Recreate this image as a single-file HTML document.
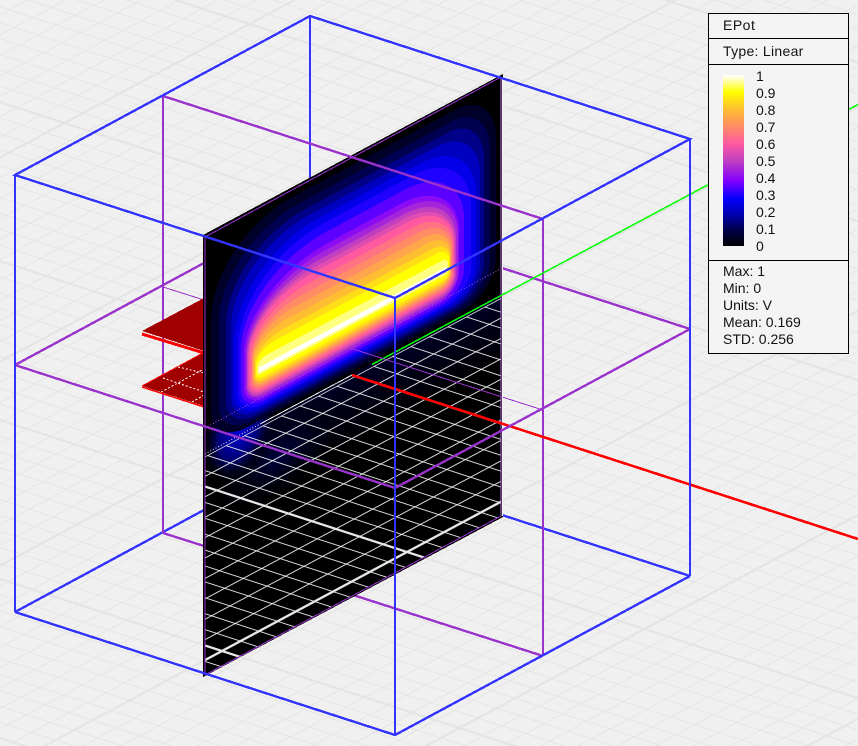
<!DOCTYPE html>
<html>
<head>
<meta charset="utf-8">
<style>
html,body{margin:0;padding:0;background:#f0f0f0;}
#w{position:relative;width:858px;height:746px;overflow:hidden;background:#f0f0f0;}
svg{position:absolute;left:0;top:0;}
#lg{position:absolute;left:708px;top:13px;width:139px;height:339px;background:#f4f4f4;border:1px solid #000;}
.s{position:absolute;left:0;width:139px;height:1px;background:#000;}
.t{position:absolute;font:14px/17px "Liberation Sans",sans-serif;color:#111;white-space:pre;}
#bar{position:absolute;left:14px;top:61px;width:21px;height:171px;background:linear-gradient(to top,#000 0%,#000050 10%,#0000c0 20%,#0800ff 28%,#8000ff 38%,#c040c0 50%,#ff5aa0 60%,#ff8c64 70%,#ffbe32 80%,#ffff00 90%,#fff 100%);}
</style>
</head>
<body>
<div id="w">
<svg width="858" height="746" viewBox="0 0 858 746">
<defs>
<pattern id="bg" patternUnits="userSpaceOnUse" width="100" height="100" patternTransform="matrix(1.85,-.99,2.375,.77,407,552)">
<path d="M10 0V100M20 0V100M30 0V100M40 0V100M50 0V100M60 0V100M70 0V100M80 0V100M90 0V100" stroke="#e4e4e4" stroke-width=".6" fill="none"/>
<path d="M0 10H100M0 20H100M0 30H100M0 40H100M0 50H100M0 60H100M0 70H100M0 80H100M0 90H100" stroke="#e4e4e4" stroke-width=".5" fill="none"/>
<path d="M0 0V100M100 0V100" stroke="#e4e4e4" stroke-width="1.4" fill="none"/>
<path d="M0 0H100M0 100H100" stroke="#e4e4e4" stroke-width="1.2" fill="none"/>
</pattern>
<pattern id="pg" patternUnits="userSpaceOnUse" width="100" height="100" patternTransform="matrix(1.85,-.99,2.375,.77,407,552)">
<path d="M10 0V100M20 0V100M30 0V100M40 0V100M50 0V100M60 0V100M70 0V100M80 0V100M90 0V100" stroke="#f0f0f0" stroke-width=".58" fill="none"/>
<path d="M0 10H100M0 20H100M0 30H100M0 40H100M0 50H100M0 60H100M0 70H100M0 80H100M0 90H100" stroke="#f0f0f0" stroke-width=".5" fill="none"/>
<path d="M0 0V100M100 0V100" stroke="#e8e8e8" stroke-width="1.5" fill="none"/>
<path d="M0 0H100M0 100H100" stroke="#e8e8e8" stroke-width="1.3" fill="none"/>
</pattern>
<clipPath id="abv"><rect x="0" y="0" width="300" height="219"/></clipPath>
<clipPath id="pl"><rect x="0" y="0" width="300" height="445"/></clipPath>
<clipPath id="gr"><polygon points="205,456.5 501,298 501,516 205,676"/></clipPath>
<radialGradient id="gl"><stop offset="0" stop-color="#0000d8"/><stop offset=".55" stop-color="#000078"/><stop offset="1" stop-color="#000000" stop-opacity="0"/></radialGradient>
<radialGradient id="gd"><stop offset="0" stop-color="#000040"/><stop offset="1" stop-color="#000000" stop-opacity="0"/></radialGradient>
<linearGradient id="gv" x1="0" y1="0" x2="0" y2="1"><stop offset="0" stop-color="#000024"/><stop offset="1" stop-color="#000"/></linearGradient>
</defs>

<rect width="858" height="746" fill="#f0f0f0"/>
<rect width="858" height="746" fill="url(#bg)"/>

<g fill="none" stroke-width="2" shape-rendering="crispEdges">
<!-- behind plane -->
<g stroke="#3333ff" stroke-width="2.4">
<path d="M15 612L204 510"/>
<path d="M310 16V178" stroke-width="2"/>
<path d="M502 515L690 576"/>
</g>
<g stroke="#9933cc" stroke-width="2.4">
<path d="M163 96V533" stroke-width="2"/>
<path d="M15 365L204 263"/>
<path d="M163 533L204 546"/>
<path d="M353 595L543 656"/>
<path d="M543 219V656" stroke-width="2"/>
<path d="M502 268L690 329"/>
<path d="M502 397L543 410" stroke-width="1"/>
<path d="M163 287L204 300" stroke-width="1"/>
</g>
</g>

<!-- red sheets -->
<g shape-rendering="crispEdges">
<polygon points="142,386 203,353 204,406" fill="#a00000"/>
<path d="M142 387L204 407" stroke="#ff0000" stroke-width="1.5" fill="none"/>
<path d="M142 386L203 353" stroke="#ff0000" stroke-width="1" fill="none"/>
<path d="M178 367L204 373M163 378L204 392M161 392L204 369M192 402L204 395" stroke="#fff" stroke-width="1" stroke-dasharray="2 2" fill="none"/>
<polygon points="142,331 204,298 204,351" fill="#a00000"/>
<path d="M142 334L204 353" stroke="#ff0000" stroke-width="3" fill="none"/>
</g>

<!-- plane -->
<polygon points="203,235 503,74 503,517 203,677" fill="#000" shape-rendering="crispEdges"/>
<g transform="matrix(1,-.537,0,1,203,235)">
<g clip-path="url(#pl)">
<rect x="56" y="219" width="242" height="70" fill="url(#gv)"/>
<ellipse cx="75" cy="262" rx="70" ry="46" fill="url(#gd)"/>
<ellipse cx="36" cy="214" rx="38" ry="50" fill="url(#gl)"/>
</g>
<g clip-path="url(#abv)" shape-rendering="crispEdges">
<path fill="#000028" d="M8,90 a80,80 0 0 1 80,-80 H253 a40,50 0 0 1 40,50 V180 a36,36 0 0 1 -36,36 H44 a36,36 0 0 1 -36,-36Z"/>
<path fill="#000050" d="M16,95 a80,75 0 0 1 80,-75 H249 a38,48 0 0 1 38,48 V179 a33,33 0 0 1 -33,33 H49 a33,33 0 0 1 -33,-33Z"/>
<path fill="#000088" d="M23,101 a80,72 0 0 1 80,-72 H245 a36,45 0 0 1 36,45 V178 a31,31 0 0 1 -31,31 H54 a31,31 0 0 1 -31,-31Z"/>
<path fill="#0000c0" d="M28,107 a78,70 0 0 1 78,-70 H233 a44,50 0 0 1 44,50 V177 a29,29 0 0 1 -29,29 H57 a29,29 0 0 1 -29,-29Z"/>
<path fill="#0300e9" d="M31,125 a85,80 0 0 1 85,-80 H218 a55,60 0 0 1 55,60 V176 a27,27 0 0 1 -27,27 H58 a27,27 0 0 1 -27,-27Z"/>
<path fill="#2000ff" d="M35,131 a85,78 0 0 1 85,-78 H210 a58,62 0 0 1 58,62 V176 a25,25 0 0 1 -25,25 H60 a25,25 0 0 1 -25,-25Z"/>
<path fill="#5c00ff" d="M38,135 a85,72 0 0 1 85,-72 H201 a60,60 0 0 1 60,60 V175 a23,23 0 0 1 -23,23 H61 a23,23 0 0 1 -23,-23Z"/>
<path fill="#8b0bf5" d="M41,140 a85,65 0 0 1 85,-65 H198 a58,58 0 0 1 58,58 V175 a20,20 0 0 1 -20,20 H61 a20,20 0 0 1 -20,-20Z"/>
<path fill="#a525db" d="M43,141 a80,60 0 0 1 80,-60 H200 a55,55 0 0 1 55,55 V175 a18,18 0 0 1 -18,18 H61 a18,18 0 0 1 -18,-18Z"/>
<path fill="#c040c0" d="M44,143 a75,56 0 0 1 75,-56 H201 a52,52 0 0 1 52,52 V175 a16,16 0 0 1 -16,16 H60 a16,16 0 0 1 -16,-16Z"/>
<path fill="#df4db0" d="M45,144 a70,52 0 0 1 70,-52 H202 a50,50 0 0 1 50,50 V174 a15,15 0 0 1 -15,15 H60 a15,15 0 0 1 -15,-15Z"/>
<path fill="#ff5aa0" d="M46,145 a65,48 0 0 1 65,-48 H205 a46,46 0 0 1 46,46 V173 a14,14 0 0 1 -14,14 H60 a14,14 0 0 1 -14,-14Z"/>
<path fill="#ff7382" d="M48,147 a58,42 0 0 1 58,-42 H210 a40,40 0 0 1 40,40 V172 a13,13 0 0 1 -13,13 H61 a13,13 0 0 1 -13,-13Z"/>
<path fill="#ff8c64" d="M49,149 a50,36 0 0 1 50,-36 H215 a34,34 0 0 1 34,34 V171 a12,12 0 0 1 -12,12 H61 a12,12 0 0 1 -12,-12Z"/>
<path fill="#ffa54b" d="M50,151 a42,30 0 0 1 42,-30 H220 a28,28 0 0 1 28,28 V170 a11,11 0 0 1 -11,11 H61 a11,11 0 0 1 -11,-11Z"/>
<path fill="#ffbe32" d="M51,153 a34,24 0 0 1 34,-24 H225 a22,22 0 0 1 22,22 V169 a10,10 0 0 1 -10,10 H61 a10,10 0 0 1 -10,-10Z"/>
<path fill="#ffde19" d="M52,157 a28,20 0 0 1 28,-20 H229 a18,18 0 0 1 18,18 V169 a8,8 0 0 1 -8,8 H60 a8,8 0 0 1 -8,-8Z"/>
<path fill="#ffff00" d="M53,159 a20,15 0 0 1 20,-15 H234 a12,12 0 0 1 12,12 V168 a6,6 0 0 1 -6,6 H59 a6,6 0 0 1 -6,-6Z"/>
<path fill="#ffff80" d="M54,162 a10,8 0 0 1 10,-8 H239 a6,6 0 0 1 6,6 V167 a3,3 0 0 1 -3,3 H57 a3,3 0 0 1 -3,-3Z"/>
<rect x="56" y="162.5" width="187" height="5" fill="#ffffff"/>
</g>
</g>

<!-- plane grid -->
<rect x="203" y="290" width="300" height="390" fill="url(#pg)" clip-path="url(#gr)"/>
<path d="M260 424L352 375" stroke="#f4f4f4" stroke-width="1" fill="none" shape-rendering="crispEdges"/>
<path d="M205 454L260 424" stroke="#f4f4f4" stroke-width="1" stroke-dasharray="1 2" fill="none"/>

<g fill="none" shape-rendering="crispEdges">
<!-- plane outline -->
<path d="M205 237L501 77M205 237V675M205 675L501 516" stroke="#9933cc" stroke-width="1"/>
<path d="M501 77V516" stroke="#b070d8" stroke-width="1"/>
<path d="M502.5 77V516" stroke="#f4f4f4" stroke-width="1"/>
<!-- axes -->
<path d="M372 364.5L858 104.5" stroke="#00ff00" stroke-width="1.5"/>
<path d="M352 375L858 539" stroke="#ff0000" stroke-width="2.6"/>
<!-- purple front -->
<g stroke="#9933cc" stroke-width="2.4">
<path d="M163 96L543 219"/>
<path d="M15 365L395 488L690 329"/>
<path d="M350 348L502 397" stroke-width="1"/>
</g>
<path d="M205 428L502 268" stroke="#a050e0" stroke-width="1" stroke-dasharray="1 2"/>
<!-- blue front -->
<g stroke="#3333ff" stroke-width="2.4">
<path d="M15 175L310 16L690 139L395 298Z"/>
<path d="M15 612L395 735L690 576"/>
<path d="M15 175V612M690 139V576M395 298V735" stroke-width="2"/>
</g>
</g>
</svg>

<div id="lg">
<div class="s" style="top:24px"></div>
<div class="s" style="top:50px"></div>
<div class="s" style="top:246px"></div>
<div class="t" style="left:14px;top:3px;letter-spacing:.5px">EPot</div>
<div class="t" style="left:14px;top:29px;letter-spacing:.3px">Type: Linear</div>
<div id="bar"></div>
<div class="t" style="left:47px;top:54px">1</div>
<div class="t" style="left:47px;top:71px">0.9</div>
<div class="t" style="left:47px;top:88px">0.8</div>
<div class="t" style="left:47px;top:105px">0.7</div>
<div class="t" style="left:47px;top:122px">0.6</div>
<div class="t" style="left:47px;top:139px">0.5</div>
<div class="t" style="left:47px;top:156px">0.4</div>
<div class="t" style="left:47px;top:173px">0.3</div>
<div class="t" style="left:47px;top:190px">0.2</div>
<div class="t" style="left:47px;top:207px">0.1</div>
<div class="t" style="left:47px;top:224px">0</div>
<div class="t" style="left:14px;top:249px">Max: 1</div>
<div class="t" style="left:14px;top:266px">Min: 0</div>
<div class="t" style="left:14px;top:283px">Units: V</div>
<div class="t" style="left:14px;top:300px">Mean: 0.169</div>
<div class="t" style="left:14px;top:317px">STD: 0.256</div>
</div>
</div>
</body>
</html>
